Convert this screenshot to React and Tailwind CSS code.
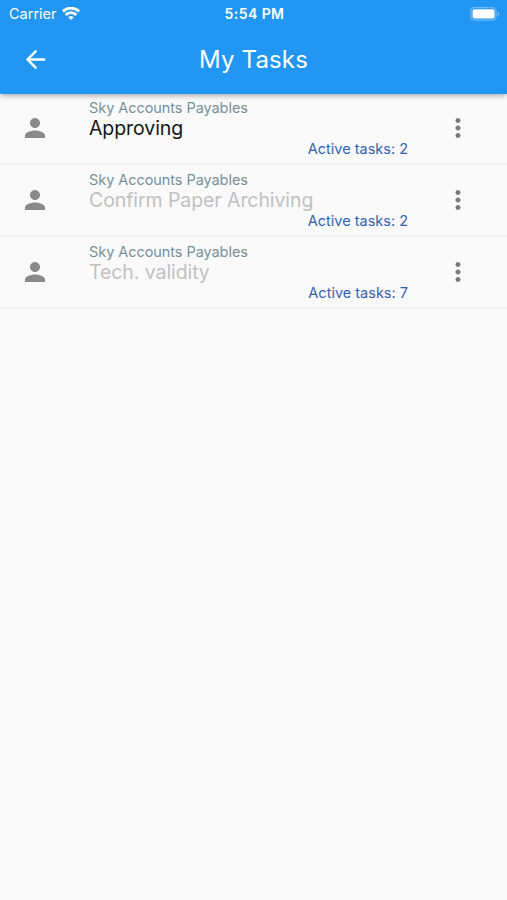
import React from 'react';
import { MdArrowBack, MdMoreVert, MdPerson } from 'react-icons/md';

const tasks = [
  { id: 1, group: 'Sky Accounts Payables', title: 'Approving', active: 2, enabled: true },
  { id: 2, group: 'Sky Accounts Payables', title: 'Confirm Paper Archiving', active: 2, enabled: false },
  { id: 3, group: 'Sky Accounts Payables', title: 'Tech. validity', active: 7, enabled: false },
];

const WifiIcon = () => (
  <svg width="18" height="14" viewBox="0 0 18 14" fill="none" stroke="white" strokeWidth="2.8">
    <path d="M0.9 4.4a11.6 11.6 0 0 1 16.2 0" />
    <path d="M3.7 7.9a7.4 7.4 0 0 1 10.6 0" />
    <path d="M9 13l-2.6-2.6a3.7 3.7 0 0 1 5.2 0z" fill="white" stroke="none" />
  </svg>
);

const BatteryIcon = () => (
  <svg width="30" height="14" viewBox="0 0 30 14">
    <rect x="0.9" y="0.6" width="25.2" height="12.6" rx="3.6" fill="none" stroke="white" strokeOpacity="0.35" strokeWidth="1.2" />
    <rect x="2.6" y="2.3" width="22" height="9.2" rx="1.8" fill="white" />
    <path d="M27.8 4.8a2.4 2.4 0 0 1 0 4.4z" fill="white" fillOpacity="0.4" />
  </svg>
);

const StatusBar = () => (
  <div className="grid grid-cols-3 items-center h-[26px] pl-[9px] pr-[7px] text-white">
    <div className="flex items-center gap-[5px]">
      <span className="text-[14.5px] leading-[27px]">Carrier</span>
      <WifiIcon />
    </div>
    <span className="text-center text-[14px] leading-[27px] font-semibold tracking-[0.45px]">5:54 PM</span>
    <div className="flex justify-end">
      <BatteryIcon />
    </div>
  </div>
);

const TaskRow = ({ task }) => (
  <li className="flex h-[72px] border-b-2 border-[#f2f3f3]">
    <div className="w-[89px] pl-5 pt-5">
      <MdPerson size={30} className="text-[#8a8a8a]" />
    </div>
    <div className="flex-1 pt-[5px] whitespace-nowrap">
      <div className="text-[14.5px] leading-5 tracking-[-0.06px] text-[#78909c]">{task.group}</div>
      <div className={`text-[19.5px] leading-[21px] tracking-[-0.08px] ${task.enabled ? 'text-[#161616]' : 'text-[#c1c1c1]'}`}>
        {task.title}
      </div>
      <div className="text-right text-[14.5px] leading-5 text-[#3560b0]">Active tasks: {task.active}</div>
    </div>
    <div className="w-[99px] pl-[35px] pt-5">
      <MdMoreVert size={30} className="text-[#7a7a7a]" />
    </div>
  </li>
);

const App = () => {
  return (
    <div className="min-h-screen bg-[#fafafa] font-['Inter',sans-serif]">
      <header className="relative h-[94px] bg-[#2196f3] shadow-[0_3px_5px_-1px_rgba(0,0,0,0.3)]">
        <StatusBar />
        <div className="grid grid-cols-[60px_1fr_60px] items-center h-[67px] text-white">
          <MdArrowBack size={29} className="ml-[21px]" />
          <h1 className="text-center text-[24px] font-normal tracking-[0.15px]">My Tasks</h1>
        </div>
      </header>
      <ul className="-mt-[1px]">
        {tasks.map((task) => (
          <TaskRow key={task.id} task={task} />
        ))}
      </ul>
    </div>
  );
};

export default App;
